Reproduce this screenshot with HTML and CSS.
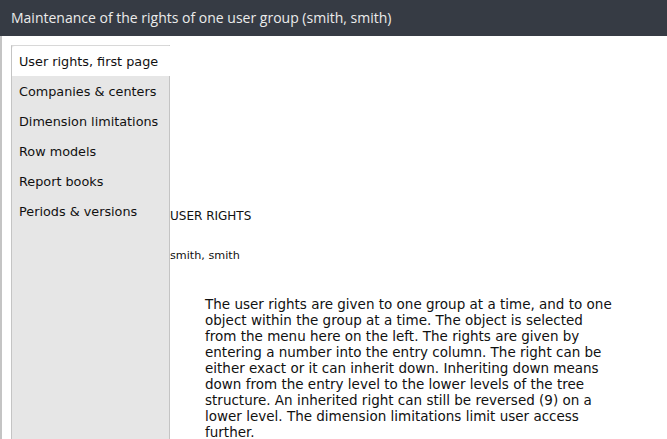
FILE: index.html
```
<!DOCTYPE html>
<html lang="en">
<head>
    <meta charset="UTF-8">
    <meta name="viewport" content="width=device-width, initial-scale=1.0">
    <link rel="stylesheet" href="styles.css">
    <title>User group rights</title>
</head>
<body>
    <div class="titlebar">Maintenance of the rights of one user group (smith, smith)</div>
    <div class="main">
        <div class="edge"></div>
        <div class="menu">
            <div class="menu-item active">User rights, first page</div>
            <div class="menu-item">Companies &amp; centers</div>
            <div class="menu-item">Dimension limitations</div>
            <div class="menu-item">Row models</div>
            <div class="menu-item">Report books</div>
            <div class="menu-item">Periods &amp; versions</div>
        </div>
        <div class="content">
            <div class="heading">USER RIGHTS</div>
            <div class="group">smith, smith</div>
            <p class="info">The user rights are given to one group at a time, and to one object within the group at a time. The object is selected from the menu here on the left. The rights are given by entering a number into the entry column. The right can be either exact or it can inherit down. Inheriting down means down from the entry level to the lower levels of the tree structure. An inherited right can still be reversed (9) on a lower level. The dimension limitations limit user access further.</p>
        </div>
    </div>
</body>
</html>
```
FILE: styles.css
```
body {
    margin: 0;
    padding: 0;
    background-color: #fff;
    font-family: "DejaVu Sans", Verdana, sans-serif;
    overflow: hidden;
    height: 439px;
}

.titlebar {
    background-color: #363b44;
    color: #ebebeb;
    font-family: "Open Sans", sans-serif;
    font-size: 14px;
    height: 36px;
    line-height: 36px;
    padding-left: 11px;
}

.main {
    display: flex;
    height: 403px;
}

.edge {
    width: 2px;
    background-color: #c4c4c4;
}

.menu {
    width: 157px;
    margin-left: 9px;
    margin-top: 9px;
    background-color: #e6e6e6;
    border-left: 1px solid #c4c4c4;
    border-right: 1px solid #c4c4c4;
    border-top: 1px solid #d8d8d8;
}

.menu-item {
    height: 30px;
    line-height: 32px;
    padding-left: 7px;
    font-size: 12.8px;
    color: #111;
    white-space: nowrap;
}

.menu-item.active {
    background-color: #fff;
    border-top-left-radius: 3px;
    margin-right: -1px;
}

.content {
    flex: 1;
    font-size: 11.2px;
    color: #111;
}

.heading {
    margin-top: 173px;
    font-size: 12px;
}

.group {
    margin-top: 26px;
}

.info {
    margin: 34px 0 0 35px;
    width: 412px;
    font-size: 13.5px;
    line-height: 16px;
}
```
